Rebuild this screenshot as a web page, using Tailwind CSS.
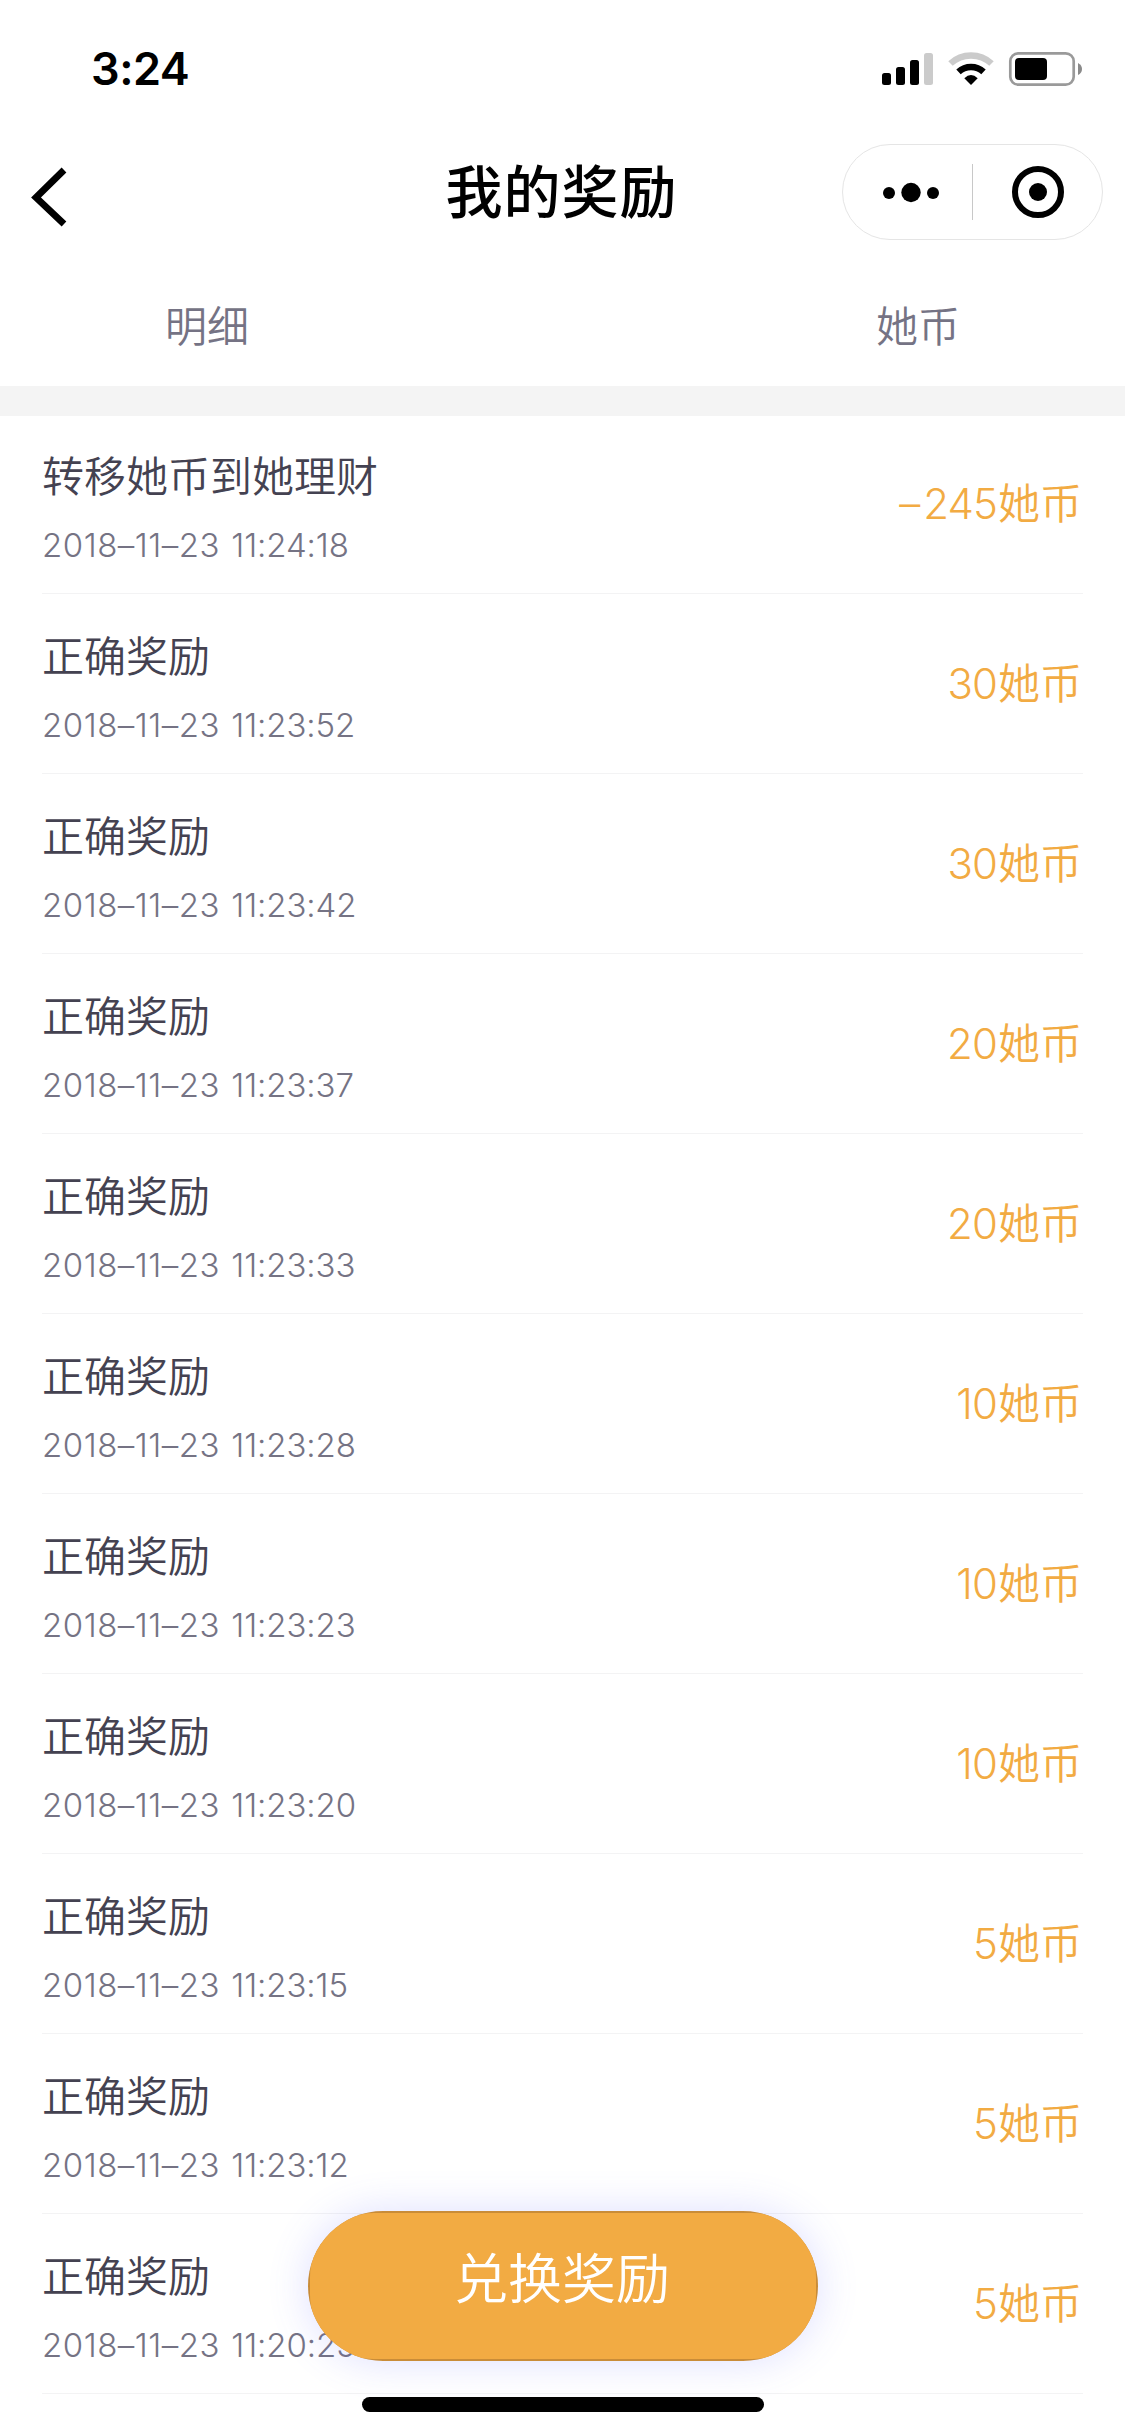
<!DOCTYPE html>
<html lang="zh-CN">
<head>
<meta charset="utf-8">
<meta name="viewport" content="width=device-width, initial-scale=1">
<title>我的奖励</title>
<script src="https://cdn.jsdelivr.net/npm/@tailwindcss/browser@4"></script>
</head>
<body class="bg-white">
<div class="relative h-[2436px] w-[1125px] overflow-hidden bg-white font-['Inter','Noto_Sans_CJK_SC',sans-serif]">
  <!-- Status bar -->
  <div class="flex h-[132px] items-start justify-between pt-[42px] pr-[43px] pl-[91px]">
    <div class="text-[45px] leading-[54px] font-semibold tracking-[-0.5px]">3:24</div>
    <svg class="mt-[9px] h-[36px] w-[201px]" viewBox="881 51 201 36">
      <g>
        <rect x="882" y="73" width="9" height="12" rx="2.5"/>
        <rect x="896" y="67" width="9" height="18" rx="2.5"/>
        <rect x="910" y="60" width="9" height="25" rx="2.5"/>
        <rect x="924" y="53" width="9" height="32" rx="2.5" fill="#cbcbcb"/>
      </g>
      <g fill="none">
        <path d="M950.5 63.5A30 30 0 0 1 991.500 63.500" stroke="#cbcbcb" stroke-width="6.500"/>
        <path d="M958.500 71.800A18.500 18.500 0 0 1 983.500 71.800" stroke="#000" stroke-width="6.500"/>
        <path d="M964.300 78.200Q971 72 977.700 78.200L971 85Z" fill="#000"/>
      </g>
      <rect x="1010.300" y="53.300" width="63.400" height="31.400" rx="8" fill="none" stroke="#9a9a9a" stroke-width="2.700"/>
      <rect x="1015" y="58" width="32" height="22" rx="4"/>
      <path d="M1078 63Q1082 65 1082 69T1078 75Z" fill="#8a8a8a"/>
    </svg>
  </div>
  <!-- Navigation bar -->
  <div class="grid h-[132px] grid-cols-[1fr_auto_1fr] items-start pr-[22px] pl-[31px]">
    <svg class="mt-[35px] h-[60px] w-[36px]" viewBox="0 0 36 60"><path d="M33 3L5 30.500L33 57" fill="none" stroke="#000" stroke-width="6.800"/></svg>
    <h1 class="mt-[18px] pr-[11px] text-[57px] leading-[86px] font-medium tracking-[1px]">我的奖励</h1>
    <div class="mt-[12px] flex h-[96px] w-[261px] items-center justify-self-end rounded-full border border-[#e5e5e5]">
      <svg class="h-[56px] w-full" viewBox="843 164 259 56">
        <circle cx="889" cy="193" r="6"/><circle cx="911" cy="192.500" r="9.700"/><circle cx="933" cy="193" r="6"/>
        <rect x="972" y="164" width="1" height="56" fill="#c8c8c8"/>
        <circle cx="1038" cy="192" r="23" fill="none" stroke="#000" stroke-width="6"/><circle cx="1038" cy="192" r="9"/>
      </svg>
    </div>
  </div>
  <!-- Column headings -->
  <div class="flex h-[122px] justify-between pt-[31px] pr-[165px] pl-[165px] text-[42px] leading-[64px] font-[350] text-[#757384]">
    <span>明细</span><span>她币</span>
  </div>
  <div class="h-[30px] bg-[#f4f4f4]"></div>
  <!-- Reward records -->
  <ul id="list" class="-mt-[2px] px-[42px]"></ul>
  <button class="absolute top-[2211px] left-[308px] flex h-[150px] w-[510px] overflow-hidden rounded-[75px] bg-[#c98c38] p-[2px] shadow-[0_0_42px_rgba(90,95,255,0.2)]">
    <span class="h-full w-full rounded-[64px] bg-[#f2ab43] pt-[27px] pr-[2px] text-[54px] leading-[80px] font-[350] text-white">兑换奖励</span>
  </button>
  <div class="absolute top-[2397px] left-[362px] h-[15px] w-[402px] rounded-full bg-black"></div>
</div>
<template id="row">
  <li class="flex h-[180px] justify-between border-b border-[#f3f3f4]">
    <div class="pt-[31px]">
      <p class="name text-[42px] leading-[64px] font-[350] text-[#444251]"></p>
      <p class="mt-[14px] text-[33px] leading-[44px] font-[350] text-[#757384]"><span class="date tracking-[0.5px]"></span> <span class="time ml-[2px] tracking-[-0.1px]"></span></p>
    </div>
    <p class="flex pt-[58px] pr-px text-[42px] leading-[64px] font-[350] text-[#f2ab43]"><span class="sign mr-[3px] empty:hidden"></span><span class="amount mr-px tracking-[-0.9px]"></span><span>她币</span></p>
  </li>
</template>
<script>
const records = [
  ['转移她币到她理财', '11:24:18', -245],
  ['正确奖励', '11:23:52', 30],
  ['正确奖励', '11:23:42', 30],
  ['正确奖励', '11:23:37', 20],
  ['正确奖励', '11:23:33', 20],
  ['正确奖励', '11:23:28', 10],
  ['正确奖励', '11:23:23', 10],
  ['正确奖励', '11:23:20', 10],
  ['正确奖励', '11:23:15', 5],
  ['正确奖励', '11:23:12', 5],
  ['正确奖励', '11:20:25', 5],
];
const list = document.getElementById('list');
const tpl = document.getElementById('row');
for (const [name, time, amount] of records) {
  const row = tpl.content.cloneNode(true);
  row.querySelector('.name').textContent = name;
  row.querySelector('.date').textContent = '2018–11–23';
  row.querySelector('.time').textContent = time;
  row.querySelector('.sign').textContent = amount < 0 ? '–' : '';
  row.querySelector('.amount').textContent = Math.abs(amount);
  list.appendChild(row);
}
</script>
</body>
</html>
